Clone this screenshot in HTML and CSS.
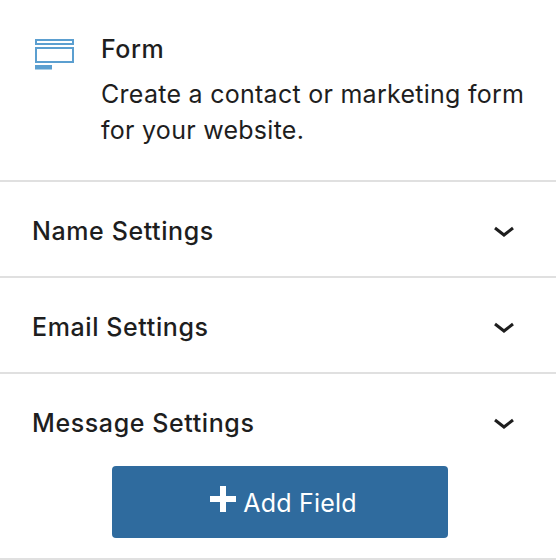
FILE: index.html
```html
<!DOCTYPE html>
<html lang="en">
<head>
<meta charset="utf-8">
<title>Form</title>
<link rel="stylesheet" href="styles.css">
</head>
<body>
<div class="panel">
  <header class="block-card">
    <svg class="block-icon" viewBox="0 0 40 32" width="40" height="32" aria-hidden="true">
      <rect x="2" y="1" width="37" height="4" fill="none" stroke="#5b9fd0" stroke-width="2"/>
      <rect x="2" y="9" width="37" height="14" fill="none" stroke="#5b9fd0" stroke-width="2"/>
      <rect x="1" y="26" width="17" height="4.5" fill="#5b9fd0"/>
    </svg>
    <div class="block-text">
      <h2 class="block-title">Form</h2>
      <p class="block-desc">Create a contact or marketing form for your website.</p>
    </div>
  </header>
  <section class="row"><span class="row-title">Name Settings</span>
    <svg class="chev" viewBox="0 0 24 14" width="24" height="14" aria-hidden="true"><path d="M3 3l9 7 9-7" fill="none" stroke="#1e1e1e" stroke-width="3"/></svg>
  </section>
  <section class="row"><span class="row-title">Email Settings</span>
    <svg class="chev" viewBox="0 0 24 14" width="24" height="14" aria-hidden="true"><path d="M3 3l9 7 9-7" fill="none" stroke="#1e1e1e" stroke-width="3"/></svg>
  </section>
  <section class="row row-open"><span class="row-title">Message Settings</span>
    <svg class="chev" viewBox="0 0 24 14" width="24" height="14" aria-hidden="true"><path d="M3 3l9 7 9-7" fill="none" stroke="#1e1e1e" stroke-width="3"/></svg>
  </section>
  <div class="actions">
    <button class="add-btn" type="button">
      <svg class="add-icon" viewBox="0 0 26 26" width="26" height="26" aria-hidden="true"><path d="M10 0h6v10h10v6H16v10h-6V16H0v-6h10z" fill="#fff"/></svg>
      <span>Add Field</span>
    </button>
  </div>
</div>
</body>
</html>
```
FILE: styles.css
```css
* { box-sizing: border-box; }
html, body { margin: 0; padding: 0; background: #fff; }
body { width: 556px; height: 560px; overflow: hidden; font-family: Inter, "Liberation Sans", sans-serif; color: #1e1e1e; }
.panel { display: flex; flex-direction: column; height: 560px; border-bottom: 2px solid #e0e0e0; }
.block-card { display: flex; gap: 27px; height: 182px; padding: 37px 24px 0 34px; border-bottom: 2px solid #e0e0e0; }
.block-icon { flex: none; margin-top: 2px; }
.block-title { margin: 0; font-size: 25px; line-height: 24px; font-weight: 500; letter-spacing: .5px; }
.block-desc { margin: 15px 0 0; font-size: 25px; line-height: 36px; font-weight: 400; letter-spacing: .27px; }
.row { display: flex; justify-content: space-between; align-items: center; height: 96px; padding: 4px 40px 0 32px; border-bottom: 2px solid #e0e0e0; }
.row-title { font-size: 25px; font-weight: 500; letter-spacing: .6px; }
.row-open { height: 92px; border-bottom: 0; padding-top: 6px; }
.chev { flex: none; margin-top: 1px; }
.actions { display: flex; justify-content: center; padding-left: 4px; }
.add-btn { display: flex; align-items: center; justify-content: center; gap: 7px; width: 336px; height: 72px; padding: 1px 0 0 7px; border: 0; border-radius: 4px; background: #2f6b9e; color: #fff; font: 400 25px Inter, "Liberation Sans", sans-serif; letter-spacing: .2px; }
.add-icon { margin-bottom: 8px; }
```
